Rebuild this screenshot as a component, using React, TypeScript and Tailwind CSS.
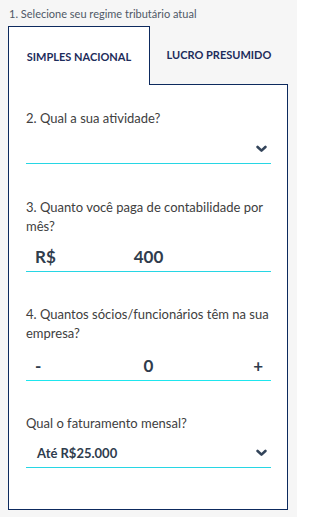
import React from "react";

function Chevron() {
  return (
    <svg width="11" height="8" viewBox="0 0 11 8" className="shrink-0">
      <path d="M1.6 2 L5.5 5.6 L9.4 2" fill="none" stroke="#33445a" strokeWidth="2.6" strokeLinecap="round" strokeLinejoin="round" />
    </svg>
  );
}

export default function App() {
  return (
    <div className="min-h-[517px] w-[297px] bg-[#f6f6f6] pt-[7px]" style={{ fontFamily: "Lato, 'Open Sans', sans-serif" }}>
      <div className="pl-[9px] text-[11px] leading-[14px] text-[#4f5866]">1. Selecione seu regime tributário atual</div>
      <div className="ml-[8px] mt-[5px] w-[280px]">
        <div className="flex h-[59px]">
          <div className="flex w-[142px] items-center justify-center border-l border-r border-t border-[#0d2a5e] bg-white pt-[3px] text-[11px] font-bold text-[#1d2c5b]">
            SIMPLES NACIONAL
          </div>
          <div className="flex flex-1 items-center justify-center border-b border-[#0d2a5e] text-[11px] font-bold text-[#1d2c5b]">
            LUCRO PRESUMIDO
          </div>
        </div>
        <div className="flex flex-col border-b border-l border-r border-[#0d2a5e] bg-white pb-[41px] pl-[17px] pr-[16px] pt-[24px] text-[13px] leading-[19px] text-[#404040]">
          <div>2. Qual a sua atividade?</div>
          <div className="mt-[6px] flex h-[30px] items-center justify-end border-b border-[#27d6e4] pr-[4px]">
            <Chevron />
          </div>
          <div className="mt-[34px]">3. Quanto você paga de contabilidade por mês?</div>
          <div className="mt-[6px] grid h-[30px] grid-cols-[1fr_auto_1fr] items-center border-b border-[#27d6e4] text-[17px] font-bold text-[#2f3c4d]">
            <span className="pl-[9px]">R$</span>
            <span>400</span>
            <span></span>
          </div>
          <div className="mt-[33px]">4. Quantos sócios/funcionários têm na sua empresa?</div>
          <div className="mt-[8px] grid h-[30px] grid-cols-[1fr_auto_1fr] items-center border-b border-[#1ee6ee] text-[17px] font-bold text-[#2f3c4d]">
            <span className="pl-[9px]">-</span>
            <span>0</span>
            <span className="pr-[8px] text-right">+</span>
          </div>
          <div className="mt-[33px]">Qual o faturamento mensal?</div>
          <div className="mt-[5px] flex h-[30px] items-center justify-between border-b border-[#27d6e4] pl-[11px] pr-[4px] pt-[1px] text-[13px] font-bold text-[#2f3c4d]">
            <span>Até R$25.000</span>
            <Chevron />
          </div>
        </div>
      </div>
    </div>
  );
}
